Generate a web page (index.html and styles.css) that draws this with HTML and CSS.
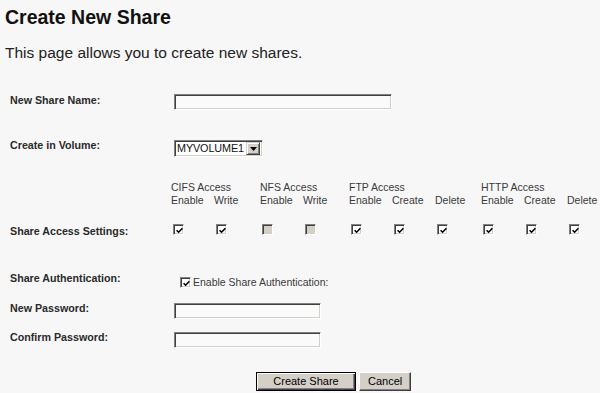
FILE: index.html
```html
<!DOCTYPE html>
<html>
<head>
<meta charset="utf-8">
<title>Create New Share</title>
<link rel="stylesheet" href="styles.css">
</head>
<body>
<h1 class="title">Create New Share</h1>
<p class="intro">This page allows you to create new shares.</p>

<form class="form">
  <div class="row r-name">
    <label class="lbl">New Share Name:</label>
    <div class="ctl"><input class="txt txt-name" type="text"></div>
  </div>

  <div class="row r-volume">
    <label class="lbl">Create in Volume:</label>
    <div class="ctl">
      <div class="select">
        <span class="select-val">MYVOLUME1</span>
        <span class="select-btn"><svg width="7" height="4" viewBox="0 0 7 4"><path d="M0 0h7L3.5 4z" fill="#000"/></svg></span>
      </div>
    </div>
  </div>

  <div class="row r-access">
    <label class="lbl lbl-access">Share Access Settings:</label>
    <div class="access">
      <div class="grp g2">CIFS Access</div>
      <div class="grp g2">NFS Access</div>
      <div class="grp g3">FTP Access</div>
      <div class="grp g3">HTTP Access</div>

      <div class="sub">Enable</div><div class="sub">Write</div>
      <div class="sub">Enable</div><div class="sub">Write</div>
      <div class="sub">Enable</div><div class="sub">Create</div><div class="sub">Delete</div>
      <div class="sub">Enable</div><div class="sub">Create</div><div class="sub">Delete</div>

      <div class="cell"><span class="cb"><svg viewBox="0 0 7 7" width="7" height="7"><path d="M0.6 3.2 2.6 5.2 6.4 1.2" fill="none" stroke="#000" stroke-width="1.6"/></svg></span></div>
      <div class="cell"><span class="cb"><svg viewBox="0 0 7 7" width="7" height="7"><path d="M0.6 3.2 2.6 5.2 6.4 1.2" fill="none" stroke="#000" stroke-width="1.6"/></svg></span></div>
      <div class="cell"><span class="cb cb-off"></span></div>
      <div class="cell"><span class="cb cb-off"></span></div>
      <div class="cell"><span class="cb"><svg viewBox="0 0 7 7" width="7" height="7"><path d="M0.6 3.2 2.6 5.2 6.4 1.2" fill="none" stroke="#000" stroke-width="1.6"/></svg></span></div>
      <div class="cell"><span class="cb"><svg viewBox="0 0 7 7" width="7" height="7"><path d="M0.6 3.2 2.6 5.2 6.4 1.2" fill="none" stroke="#000" stroke-width="1.6"/></svg></span></div>
      <div class="cell"><span class="cb"><svg viewBox="0 0 7 7" width="7" height="7"><path d="M0.6 3.2 2.6 5.2 6.4 1.2" fill="none" stroke="#000" stroke-width="1.6"/></svg></span></div>
      <div class="cell"><span class="cb"><svg viewBox="0 0 7 7" width="7" height="7"><path d="M0.6 3.2 2.6 5.2 6.4 1.2" fill="none" stroke="#000" stroke-width="1.6"/></svg></span></div>
      <div class="cell"><span class="cb"><svg viewBox="0 0 7 7" width="7" height="7"><path d="M0.6 3.2 2.6 5.2 6.4 1.2" fill="none" stroke="#000" stroke-width="1.6"/></svg></span></div>
      <div class="cell"><span class="cb"><svg viewBox="0 0 7 7" width="7" height="7"><path d="M0.6 3.2 2.6 5.2 6.4 1.2" fill="none" stroke="#000" stroke-width="1.6"/></svg></span></div>
    </div>
  </div>

  <div class="row r-auth">
    <label class="lbl">Share Authentication:</label>
    <div class="ctl auth">
      <span class="cb"><svg viewBox="0 0 7 7" width="7" height="7"><path d="M0.6 3.2 2.6 5.2 6.4 1.2" fill="none" stroke="#000" stroke-width="1.6"/></svg></span>
      <span class="auth-text">Enable Share Authentication:</span>
    </div>
  </div>

  <div class="row r-pass">
    <label class="lbl">New Password:</label>
    <div class="ctl"><input class="txt txt-pass" type="password"></div>
  </div>

  <div class="row r-confirm">
    <label class="lbl">Confirm Password:</label>
    <div class="ctl"><input class="txt txt-pass" type="password"></div>
  </div>

  <div class="actions">
    <button type="button" class="btn btn-default"><span>Create Share</span></button>
    <button type="button" class="btn">Cancel</button>
  </div>
</form>
</body>
</html>
```

FILE: styles.css
```css
html, body {
  margin: 0;
  background: #f7f7f7;
}
body {
  padding: 5px 0 0 5px;
  font-family: "Liberation Sans", Arial, sans-serif;
  color: #222;
}
.title {
  margin: 0;
  font-size: 19.5px;
  line-height: 25px;
  font-weight: bold;
  color: #111;
}
.intro {
  margin: 14px 0 0;
  font-size: 15.5px;
  line-height: 18px;
  color: #222;
}
.form {
  margin: 32px 0 0;
  padding-left: 5px;
}
.row {
  display: flex;
  align-items: flex-start;
}
.lbl {
  width: 161px;
  flex: none;
  font-size: 10.7px;
  line-height: 13px;
  font-weight: bold;
  color: #2a2a2a;
}
.ctl {
  display: flex;
  align-items: flex-start;
}
.r-volume { margin-top: 29px; }
.r-access { margin-top: 24px; }
.r-auth { margin-top: 34px; }
.r-pass { margin-top: 13px; }
.r-confirm { margin-top: 12px; }

.txt {
  box-sizing: border-box;
  height: 16px;
  margin: 0 0 0 3px;
  padding: 0 2px;
  border: 1px solid;
  border-color: #808080 #ffffff #ffffff #808080;
  box-shadow: inset 1px 1px 0 #404040, inset -1px -1px 0 #d4d0c8;
  background: #fafafa;
  font: 11px "Liberation Sans", Arial, sans-serif;
  outline: none;
}
.txt-name { width: 218px; }
.txt-pass { width: 147px; margin-top: 1px; }

.select {
  box-sizing: border-box;
  display: flex;
  align-items: center;
  width: 89px;
  height: 17px;
  margin: 1px 0 0 3px;
  border: 1px solid;
  border-color: #808080 #ffffff #ffffff #808080;
  box-shadow: inset 1px 1px 0 #404040, inset -1px -1px 0 #d4d0c8;
  background: #fff;
  padding: 1px 2px 1px 2px;
}
.select-val {
  flex: 1;
  min-width: 0;
  overflow: hidden;
  white-space: nowrap;
  font-size: 10.8px;
  line-height: 13px;
  color: #111;
  letter-spacing: -0.1px;
}
.select-btn {
  box-sizing: border-box;
  flex: none;
  width: 14px;
  height: 13px;
  display: flex;
  align-items: center;
  justify-content: center;
  background: #d4d0c8;
  border: 1px solid;
  border-color: #d4d0c8 #404040 #404040 #d4d0c8;
  box-shadow: inset 1px 1px 0 #fff, inset -1px -1px 0 #808080;
}

.lbl-access { margin-top: 44px; }
.access {
  display: grid;
  grid-template-columns: 43px 46px 43px 46px 43px 43px 46px 43px 43px 33px;
  font-size: 10.5px;
  line-height: 13px;
  color: #3a3a3a;
}
.grp.g2 { grid-column: span 2; }
.grp.g3 { grid-column: span 3; }
.sub { white-space: nowrap; }
.cell {
  padding: 17px 0 0 2px;
}
.cb {
  box-sizing: border-box;
  flex: none;
  width: 11px;
  height: 11px;
  display: flex;
  align-items: center;
  justify-content: center;
  border: 1px solid;
  border-color: #808080 #ffffff #ffffff #808080;
  box-shadow: inset 1px 1px 0 #404040, inset -1px -1px 0 #d4d0c8;
  background: #fff;
}
.cb svg { display: block; margin: 1px 0 0 1px; }
.cb-off { background: #d4d0c8; }

.auth {
  margin-left: 9px;
  padding-top: 4px;
  align-items: center;
  gap: 2px;
}
.auth-text {
  font-size: 10.5px;
  line-height: 13px;
  color: #3a3a3a;
}

.actions {
  display: flex;
  gap: 3px;
  margin: 24px 0 0 246px;
}
.btn {
  box-sizing: border-box;
  height: 19px;
  padding: 0 8px;
  background: #d4d0c8;
  border: 1px solid;
  border-color: #ffffff #404040 #404040 #ffffff;
  box-shadow: inset -1px -1px 0 #808080;
  font: 11px "Liberation Sans", Arial, sans-serif;
  color: #000;
  line-height: 15px;
}
.btn-default {
  width: 100px;
  border: 1px solid #000;
  box-shadow: inset 1px 1px 0 #fff, inset -1px -1px 0 #404040, inset -2px -2px 0 #808080;
}
```
